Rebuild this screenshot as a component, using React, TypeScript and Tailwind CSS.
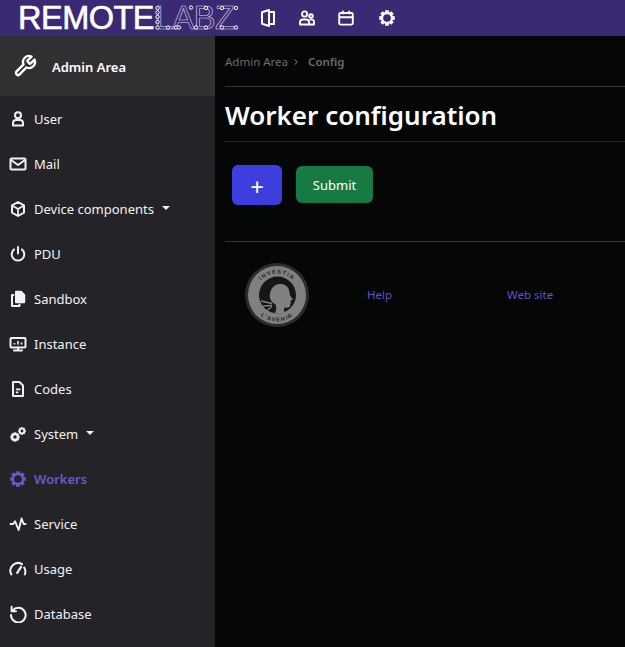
import React from "react";
import { ChevronRight } from "lucide-react";

const font = "font-['Noto_Sans','Open_Sans',sans-serif]";

function Svg({ w = 18, h = 18, children }: { w?: number; h?: number; children: React.ReactNode }) {
  return (
    <svg width={w} height={h} viewBox={`0 0 ${w} ${h}`} fill="none" stroke="currentColor" strokeWidth="2" strokeLinejoin="round" strokeLinecap="round">
      {children}
    </svg>
  );
}

function GearShape({ cx, cy, r, t }: { cx: number; cy: number; r: number; t: number }) {
  const teeth = [0, 45, 90, 135, 180, 225, 270, 315];
  return (
    <g>
      <circle cx={cx} cy={cy} r={r} stroke="currentColor" strokeWidth={t} fill="none" />
      {teeth.map((a) => (
        <rect key={a} x={cx - t * 0.8} y={cy - r - t * 1.2} width={t * 1.6} height={t * 1.1} fill="currentColor" stroke="none" transform={`rotate(${a} ${cx} ${cy})`} />
      ))}
    </g>
  );
}

const IUser = () => (
  <Svg>
    <circle cx="9" cy="5.2" r="3" />
    <path d="M4 15.5v-2.3c0-2 1.5-3.2 3.2-3.2h3.6c1.700 0 3.200 1.200 3.200 3.200v2.300z" />
  </Svg>
);
const IMail = () => (
  <Svg>
    <rect x="1.5" y="3.5" width="15" height="11" rx="1" />
    <path d="M2 5l7 5 7-5" />
  </Svg>
);
const ICube = () => (
  <Svg>
    <path d="M9 2l6 3.4v7.2L9 16l-6-3.400V5.400z" />
    <path d="M3.500 5.800L9 9l5.500-3.200M9 9v6.500" strokeWidth="1.700" />
  </Svg>
);
const IPower = () => (
  <Svg>
    <path d="M9 2v6.500" />
    <path d="M5 4.400a6.300 6.300 0 1 0 8 0" />
  </Svg>
);
const IFiles = () => (
  <Svg>
    <path d="M7 1.800h5l3.200 3.200v7.200H7z" fill="currentColor" />
    <path d="M4.500 5H3v11h7.500v-1.500" />
  </Svg>
);
const IMonitor = () => (
  <Svg>
    <rect x="1.500" y="3" width="15" height="9.500" rx="1" />
    <path d="M5 15.500h8M9 12.500v3" />
    <path d="M5.500 9.500V8M9 9.500V6M12.500 9.500V7.500" strokeWidth="1.600" strokeLinecap="butt" />
  </Svg>
);
const IDoc = () => (
  <Svg>
    <path d="M4 2h6.500L14 5.500V16H4z" />
    <path d="M6.800 9.300h4.600M6.800 12.300h2.600" strokeWidth="1.700" strokeLinecap="butt" />
  </Svg>
);
const ICogs = () => (
  <svg width="18" height="18" viewBox="0 0 18 18">
    <GearShape cx={6} cy={12} r={2.6} t={1.7} />
    <GearShape cx={13} cy={6} r={2.1} t={1.4} />
  </svg>
);
const IGear = ({ size = 18 }: { size?: number }) => (
  <svg width={size} height={size} viewBox="0 0 18 18">
    <GearShape cx={9} cy={9} r={5} t={2.3} />
  </svg>
);
const IPulse = () => (
  <Svg>
    <path d="M1.500 9h2.700l1.800-2.800L9.600 15l3-11.500L14.600 9h2" strokeWidth="1.900" />
  </Svg>
);
const IGauge = () => (
  <Svg>
    <path d="M2.400 14.400A7.600 7.600 0 0 1 13 4.200M15.200 7.500a7.600 7.600 0 0 1 .6 6.900" />
    <path d="M8.200 12.800L12 6.800" strokeWidth="2.200" />
  </Svg>
);
const IHistory = () => (
  <Svg>
    <path d="M3.700 5.400A7.300 7.300 0 1 1 2 10" />
    <path d="M2.600 1.800v4.400h4.400" />
  </Svg>
);

const IWrench = () => (
  <svg width="24" height="24" viewBox="0 0 24 24" fill="none" stroke="currentColor" strokeWidth="2.400" strokeLinecap="round" strokeLinejoin="round">
    <path d="M14.700 6.300a1 1 0 0 0 0 1.400l1.600 1.600a1 1 0 0 0 1.400 0l3.770-3.770a6 6 0 0 1-7.940 7.940l-6.910 6.910a2.120 2.120 0 0 1-3-3l6.910-6.910a6 6 0 0 1 7.940-7.940l-3.760 3.760z" />
  </svg>
);

const IDoor = () => (
  <svg width="14" height="18" viewBox="0 0 14 18" fill="none" stroke="currentColor" strokeWidth="2">
    <path d="M1 3.200 8 1v16l-7-2.200z" strokeLinejoin="round" />
    <path d="M8 3h5v12H8" />
  </svg>
);
const IPeople = () => (
  <svg width="16" height="16" viewBox="0 0 16 16" fill="none" stroke="currentColor" strokeWidth="1.900" strokeLinejoin="round">
    <circle cx="5.600" cy="4" r="2.600" />
    <circle cx="12" cy="6" r="1.800" />
    <path d="M1 14.500v-2c0-1.800 1.200-3 2.800-3h3.400c1.600 0 2.800 1.200 2.800 3v2z" />
    <path d="M10.500 9.600h2.200c1.400 0 2.300 1 2.300 2.400v2.500h-5" />
  </svg>
);
const ICalendar = () => (
  <svg width="16" height="16" viewBox="0 0 16 16" fill="none" stroke="currentColor" strokeWidth="1.900">
    <rect x="1.200" y="3" width="13.600" height="11.600" rx="1.500" />
    <path d="M1.200 7.200h13.600M4.800 0.800v3.400M11.200 0.800v3.400" />
  </svg>
);

function LogoDots() {
  const dots: [number, number][] = [
    [2.5, 5], [2.5, 9.5], [2.5, 14], [2.5, 19], [2.5, 24.5], [13, 24.5], [21, 24.5],
    [24, 24.5], [41, 24.5], [36, 4.5], [51, 5], [51, 24.5], [67, 5], [81, 5], [67, 24.5], [81, 24.5],
  ];
  return (
    <svg width="84" height="30" viewBox="0 0 84 30" fill="#3a2a73" stroke="white" strokeWidth="1" className="absolute left-0 top-0">
      {dots.map(([x, y]) => (
        <circle key={`${x}-${y}`} cx={x} cy={y} r="1.700" />
      ))}
    </svg>
  );
}

function Seal() {
  return (
    <svg width="64" height="64" viewBox="0 0 64 64">
      <circle cx="32" cy="32" r="32" fill="#2c2c2c" />
      <circle cx="32" cy="32" r="29" fill="#7f8180" />
      <circle cx="32.500" cy="32" r="18.500" fill="#161616" />
      <path d="M30 50c1.500-3 1.500-6 .5-8.500-4-2-6.500-5.500-5.500-11 1-6 5.500-10 11-9.500 5 .5 8 3.500 8.500 8l.5 3.500 3 4-2.500 1 .5 2.500-1 1 .3 2c-.3 1.500-2.500 2-5.800 1.500-.8 2-.5 3.500.5 5.500-3 1-7 1-10 0z" fill="#7f8180" />
      <path d="M16 38l11 2.500M18 43l9-.5M22 47.500l5-4" stroke="#7f8180" strokeWidth="1.300" />
      <defs>
        <path id="sealTop" d="M10.500 32a21.500 21.500 0 0 1 43 0" />
        <path id="sealBottom" d="M5.500 32a26.500 26.500 0 0 0 53 0" />
      </defs>
      <text fontSize="5.500" fontWeight="700" fill="#222" letterSpacing="1.300" fontFamily="Liberation Sans, sans-serif" textAnchor="middle">
        <textPath href="#sealTop" startOffset="50%">INVESTIR</textPath>
      </text>
      <text fontSize="5.500" fontWeight="700" fill="#222" letterSpacing="1.300" fontFamily="Liberation Sans, sans-serif" textAnchor="middle">
        <textPath href="#sealBottom" startOffset="50%">L'AVENIR</textPath>
      </text>
    </svg>
  );
}

type Item = { label: string; icon: React.ReactNode; caret?: boolean; active?: boolean };

const items: Item[] = [
  { label: "User", icon: <IUser /> },
  { label: "Mail", icon: <IMail /> },
  { label: "Device components", icon: <ICube />, caret: true },
  { label: "PDU", icon: <IPower /> },
  { label: "Sandbox", icon: <IFiles /> },
  { label: "Instance", icon: <IMonitor /> },
  { label: "Codes", icon: <IDoc /> },
  { label: "System", icon: <ICogs />, caret: true },
  { label: "Workers", icon: <IGear />, active: true },
  { label: "Service", icon: <IPulse /> },
  { label: "Usage", icon: <IGauge /> },
  { label: "Database", icon: <IHistory /> },
];

export default function App() {
  return (
    <div className={`h-[647px] w-[625px] overflow-hidden bg-[#050606] text-[14px] ${font}`}>
      <header className="flex h-9 items-center bg-[#3a2a73] text-white">
        <div className="ml-[18px] flex w-[220px] items-center">
          <span className="font-['Liberation_Sans',sans-serif] text-[32.5px] leading-none tracking-[-0.5px] [-webkit-text-stroke:0.6px_white]">REMOTE</span>
          <span className="relative ml-[1px] flex h-[30px] items-center font-['Liberation_Sans',sans-serif] text-[32.5px] leading-none text-transparent tracking-[-0.5px] [-webkit-text-stroke:0.6px_#dcd8ee]">
            LABZ
            <LogoDots />
          </span>
        </div>
        <div className="ml-[23px] flex items-center">
          <span className="flex w-[38px]"><IDoor /></span>
          <span className="flex w-[39px]"><IPeople /></span>
          <span className="flex w-[40px]"><ICalendar /></span>
          <IGear size={18} />
        </div>
      </header>
      <div className="flex h-[611px]">
        <aside className="w-[215px] shrink-0 bg-[#232328]">
          <div className="flex h-[60px] items-center gap-[15px] bg-[#303033] pl-[13px] text-white">
            <IWrench />
            <span className="pt-[3px] text-[13px] font-semibold">Admin Area</span>
          </div>
          <nav>
            {items.map((it) => (
              <div key={it.label} className={`flex h-[45px] items-center ${it.active ? "font-semibold text-[#6a5acd]" : "text-[#f2f2f2]"}`}>
                <span className="flex w-[34px] items-center justify-center pl-0.5">{it.icon}</span>
                <span className="pt-[2px] text-[13px]">{it.label}</span>
                {it.caret && <span className="ml-2 mb-0.5 border-x-4 border-t-4 border-x-transparent border-t-[#f2f2f2]" />}
              </div>
            ))}
          </nav>
        </aside>
        <main className="min-w-0 flex-1 pl-[10px]">
          <div className="flex h-[51px] items-center border-b border-[#343438] pt-[2px] text-[11.5px] text-[#6c6c6c]">
            <span>Admin Area</span>
            <ChevronRight size={10} className="mx-[3px] text-[#999]" />
            <span className="ml-[4px] font-semibold">Config</span>
          </div>
          <h1 className="flex h-[55px] items-center border-b border-[#2b2b2e] pt-[2px] text-[26px] font-semibold text-white">Worker configuration</h1>
          <div className="flex h-[100px] items-start border-b border-[#343438] pt-[23px]">
            <button className="ml-[7px] flex h-10 w-[50px] items-center justify-center rounded-md bg-[#3c3fdd] pt-[3px] text-white">
              <span className="text-[24px] leading-none">+</span>
            </button>
            <button className="ml-[14px] mt-px h-[37px] w-[77px] rounded-md bg-[#167a42] pt-[2px] text-[13px] text-white">Submit</button>
          </div>
          <footer className="flex h-[106px] items-center">
            <span className="ml-[20px]"><Seal /></span>
            <a className="ml-[58px] text-[11.5px] text-[#5f52cc]">Help</a>
            <a className="ml-[115px] text-[11.5px] text-[#5f52cc]">Web site</a>
          </footer>
        </main>
      </div>
    </div>
  );
}
